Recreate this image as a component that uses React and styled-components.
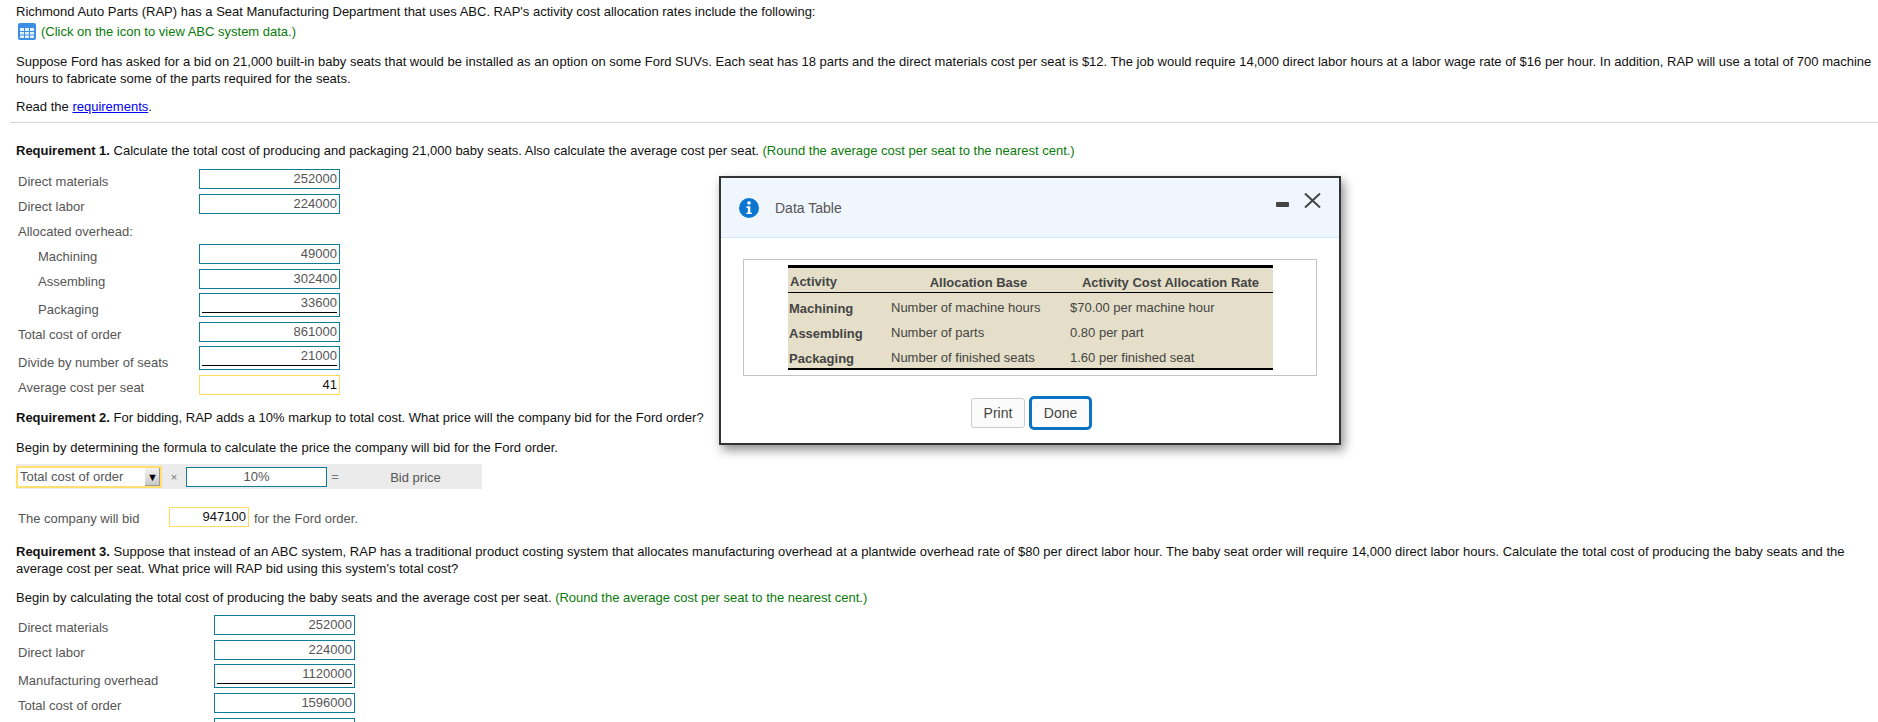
import React from "react";
import styled, { createGlobalStyle } from "styled-components";

const GlobalStyle = createGlobalStyle`
  html, body {
    margin: 0;
    padding: 0;
    background: #fff;
  }
  body {
    font-family: "Liberation Sans", Arial, sans-serif;
    font-size: 13px;
    color: #111;
  }
`;

const Page = styled.div`
  position: relative;
  width: 1878px;
  height: 722px;
  overflow: hidden;
  box-sizing: border-box;
`;

const Section = styled.div`
  padding-left: 16px;
`;

const Para = styled.p`
  margin: ${(p) => p.$top || 0}px 0 0;
  line-height: 17px;
  white-space: nowrap;
`;

const Hint = styled.span`
  color: #0a7a0a;
`;

const Link = styled.a`
  color: #0000ee;
  text-decoration: underline;
`;

const Divider = styled.hr`
  margin: 7px 0 0;
  border: 0;
  border-top: 1px solid #d3d6df;
  margin-left: 10px;
`;

const FormRows = styled.div`
  display: flex;
  flex-direction: column;
  margin-top: ${(p) => p.$top || 0}px;
`;

const Row = styled.div`
  display: flex;
  align-items: center;
  height: ${(p) => (p.$under ? 24 : 20)}px;
  margin-top: ${(p) => (p.$under ? -1 : 0)}px;
  margin-bottom: 5px;
`;

const Label = styled.span`
  width: ${(p) => p.$width}px;
  padding-left: ${(p) => (p.$indent ? 22 : 2)}px;
  padding-top: ${(p) => (p.$under ? 8 : 4)}px;
  box-sizing: border-box;
  color: #555;
  flex: none;
`;

const AmountBox = styled.div`
  width: ${(p) => p.$width || 141}px;
  height: ${(p) => (p.$under ? 24 : 20)}px;
  box-sizing: border-box;
  border: 1px solid ${(p) => (p.$answer ? "#ffdc5c" : "#0f7c9c")};
  padding: 0 2px;
  color: ${(p) => (p.$answer ? "#111" : "#555")};
  text-align: right;
  line-height: 17px;
  background: #fff;
  flex: none;
`;

const AmountValue = styled.div`
  height: ${(p) => (p.$under ? 18 : 17)}px;
  border-bottom: ${(p) => (p.$under ? "1px solid #000" : "0")};
`;

const FormulaBar = styled.div`
  display: flex;
  align-items: center;
  width: 466px;
  height: 25px;
  margin-top: 8px;
  background: #ebebeb;
`;

const Select = styled.div`
  display: flex;
  align-items: center;
  justify-content: space-between;
  width: 146px;
  height: 22px;
  box-sizing: border-box;
  border: 2px solid #ffdf6e;
  background: #fff;
  padding-left: 2px;
  color: #555;
  flex: none;
`;

const SelectArrow = styled.span`
  display: flex;
  align-items: center;
  justify-content: center;
  width: 15px;
  height: 18px;
  background: linear-gradient(#f2f2f2, #c8c8c8);
  box-shadow: inset -1px -1px 0 #999;
  color: #000;
  font-size: 11px;
`;

const Operator = styled.span`
  width: ${(p) => p.$width}px;
  text-align: center;
  color: #777;
  font-size: ${(p) => p.$size || 13}px;
  flex: none;
`;

const FactorBox = styled(AmountBox)`
  text-align: center;
`;

const BidPrice = styled.span`
  flex: 1;
  padding: 2px 0 0 6px;
  text-align: center;
  color: #555;
`;

const BidRow = styled.div`
  display: flex;
  align-items: center;
  height: 20px;
  margin-top: 18px;
`;

const BidLabel = styled.span`
  width: 153px;
  padding-left: 2px;
  padding-top: 2px;
  box-sizing: border-box;
  color: #555;
  flex: none;
`;

const BidTail = styled.span`
  margin-left: 5px;
  padding-top: 2px;
  color: #555;
`;

const Dialog = styled.div`
  position: absolute;
  left: 719px;
  top: 176px;
  width: 622px;
  height: 269px;
  box-sizing: border-box;
  border: 2px solid #333;
  background: #fff;
  box-shadow: 3px 5px 10px rgba(0, 0, 0, 0.45);
`;

const DialogHeader = styled.div`
  display: flex;
  align-items: center;
  height: 60px;
  box-sizing: border-box;
  padding: 0 18px 0 18px;
  background: #f0f6fe;
  border-bottom: 1px solid #cfe6fb;
`;

const DialogTitle = styled.span`
  margin-left: 16px;
  color: #555;
  font-size: 14px;
`;

const HeaderActions = styled.div`
  display: flex;
  align-items: flex-start;
  gap: 15px;
  margin-left: auto;
  margin-bottom: 14px;
`;

const Minimize = styled.span`
  width: 13px;
  height: 5px;
  margin-top: 9px;
  border-radius: 1px;
  background: #444;
`;

const DialogBody = styled.div`
  padding: 21px 22px 0 22px;
`;

const TableFrame = styled.div`
  height: 117px;
  box-sizing: border-box;
  padding: 5px 0 0 44px;
  border: 1px solid #c4c4c4;
`;

const DataTable = styled.table`
  width: 485px;
  border-collapse: collapse;
  table-layout: fixed;
  background: #e5dfc9;
  border-top: 3px solid #000;
  border-bottom: 2px solid #000;
  color: #444;

  tr:last-child td {
    height: 26px;
  }
`;

const HeadCell = styled.th`
  box-sizing: border-box;
  height: 26px;
  padding: ${(p) => (p.$lift ? 3 : 5)}px ${(p) => p.$right || 0}px 0 ${(p) => p.$pad || 0}px;
  font-weight: bold;
  text-align: ${(p) => p.$align || "center"};
  border-bottom: 1px solid #000;
`;

const NameCell = styled.td`
  box-sizing: border-box;
  height: 25px;
  padding: 7px 0 0 1px;
  line-height: 17px;
  vertical-align: top;
  font-weight: bold;
`;

const TextCell = styled.td`
  box-sizing: border-box;
  height: 25px;
  padding: 6px 0 0;
  line-height: 17px;
  vertical-align: top;
`;

const ButtonRow = styled.div`
  display: flex;
  align-items: center;
  justify-content: center;
  gap: 4px;
  margin-top: 20px;
  padding-left: 3px;
`;

const Button = styled.button`
  height: ${(p) => (p.$primary ? 34 : 30)}px;
  width: ${(p) => (p.$primary ? 63 : 54)}px;
  box-sizing: border-box;
  border: ${(p) => (p.$primary ? "3px solid #0b72c4" : "1px solid #ccc")};
  border-radius: ${(p) => (p.$primary ? 5 : 3)}px;
  background: #fbfbfb;
  color: #444;
  font-family: inherit;
  font-size: 14px;
  padding: 0;
`;

const GridGlyph = styled.svg`
  vertical-align: -4px;
  margin: 0 5px 0 2px;
`;

function GridIcon() {
  return (
    <GridGlyph width="18" height="17" viewBox="0 0 18 17">
      <rect x="0" y="0" width="18" height="17" rx="2" fill="#3a8fe4" />
      <path
        d="M2 5h4v3H2zM7 5h4v3H7zM12 5h4v3h-4zM2 9h4v2.500H2zM7 9h4v2.500H7zM12 9h4v2.500h-4zM2 12.500h4V15H2zM7 12.500h4V15H7zM12 12.500h4V15h-4z"
        fill="#e6f0fb"
      />
    </GridGlyph>
  );
}

function InfoIcon() {
  return (
    <svg width="20" height="20" viewBox="0 0 20 20">
      <circle cx="10" cy="10" r="10" fill="#0b76cf" />
      <circle cx="10" cy="5" r="1.8" fill="#fff" />
      <path d="M7.5 8.3h3.8v6.2h1.4v1.600H7.500v-1.600h1.400V9.900H7.500z" fill="#fff" />
    </svg>
  );
}

function CloseIcon() {
  return (
    <svg width="17" height="15" viewBox="0 0 17 15">
      <path d="M1 0.5L16 14.500M16 0.500L1 14.500" stroke="#444" strokeWidth="2" fill="none" />
    </svg>
  );
}

function Amount({ label, value, under, indent, answer, labelWidth = 183 }) {
  return (
    <Row $under={under}>
      <Label $width={labelWidth} $indent={indent} $under={under}>
        {label}
      </Label>
      <AmountBox $under={under} $answer={answer}>
        <AmountValue $under={under}>{value}</AmountValue>
      </AmountBox>
    </Row>
  );
}

const tableRows = [
  ["Machining", "Number of machine hours", "$70.00 per machine hour"],
  ["Assembling", "Number of parts", "0.80 per part"],
  ["Packaging", "Number of finished seats", "1.60 per finished seat"],
];

export default function App() {
  return (
    <Page>
      <GlobalStyle />
      <Section>
        <Para $top={3}>
          Richmond Auto Parts (RAP) has a Seat Manufacturing Department that uses ABC. RAP's activity cost allocation rates include the following:
        </Para>
        <Para $top={3}>
          <GridIcon />
          <Hint>(Click on the icon to view ABC system data.)</Hint>
        </Para>
        <Para $top={13}>
          Suppose Ford has asked for a bid on 21,000 built-in baby seats that would be installed as an option on some Ford SUVs. Each seat has 18 parts and the direct materials cost per seat is $12. The job would require 14,000 direct labor hours at a labor wage rate of $16 per hour. In addition, RAP will use a total of 700 machine
          <br />
          hours to fabricate some of the parts required for the seats.
        </Para>
        <Para $top={11}>
          Read the <Link href="#">requirements</Link>.
        </Para>
      </Section>
      <Divider />
      <Section>
        <Para $top={19}>
          <b>Requirement 1.</b> Calculate the total cost of producing and packaging 21,000 baby seats. Also calculate the average cost per seat. <Hint>(Round the average cost per seat to the nearest cent.)</Hint>
        </Para>
        <FormRows $top={10}>
          <Amount label="Direct materials" value="252000" />
          <Amount label="Direct labor" value="224000" />
          <Row>
            <Label $width={183}>Allocated overhead:</Label>
          </Row>
          <Amount indent label="Machining" value="49000" />
          <Amount indent label="Assembling" value="302400" />
          <Amount indent under label="Packaging" value="33600" />
          <Amount label="Total cost of order" value="861000" />
          <Amount under label="Divide by number of seats" value="21000" />
          <Amount answer label="Average cost per seat" value="41" />
        </FormRows>
        <Para $top={9}>
          <b>Requirement 2.</b> For bidding, RAP adds a 10% markup to total cost. What price will the company bid for the Ford order?
        </Para>
        <Para $top={13}>Begin by determining the formula to calculate the price the company will bid for the Ford order.</Para>
        <FormulaBar>
          <Select>
            Total cost of order
            <SelectArrow>▼</SelectArrow>
          </Select>
          <Operator $width={24} $size={11}>×</Operator>
          <FactorBox>10%</FactorBox>
          <Operator $width={16}>=</Operator>
          <BidPrice>Bid price</BidPrice>
        </FormulaBar>
        <BidRow>
          <BidLabel>The company will bid</BidLabel>
          <AmountBox $answer $width={80}>947100</AmountBox>
          <BidTail>for the Ford order.</BidTail>
        </BidRow>
        <Para $top={16}>
          <b>Requirement 3.</b> Suppose that instead of an ABC system, RAP has a traditional product costing system that allocates manufacturing overhead at a plantwide overhead rate of $80 per direct labor hour. The baby seat order will require 14,000 direct labor hours. Calculate the total cost of producing the baby seats and the
          <br />
          average cost per seat. What price will RAP bid using this system's total cost?
        </Para>
        <Para $top={12}>
          Begin by calculating the total cost of producing the baby seats and the average cost per seat. <Hint>(Round the average cost per seat to the nearest cent.)</Hint>
        </Para>
        <FormRows $top={9}>
          <Amount labelWidth={198} label="Direct materials" value="252000" />
          <Amount labelWidth={198} label="Direct labor" value="224000" />
          <Amount labelWidth={198} under label="Manufacturing overhead" value="1120000" />
          <Amount labelWidth={198} label="Total cost of order" value="1596000" />
          <Amount labelWidth={198} value="" />
        </FormRows>
      </Section>

      <Dialog>
        <DialogHeader>
          <InfoIcon />
          <DialogTitle>Data Table</DialogTitle>
          <HeaderActions>
            <Minimize />
            <CloseIcon />
          </HeaderActions>
        </DialogHeader>
        <DialogBody>
          <TableFrame>
            <DataTable>
              <colgroup>
                <col style={{ width: 103 }} />
                <col style={{ width: 179 }} />
                <col />
              </colgroup>
              <thead>
                <tr>
                  <HeadCell $align="left" $pad={2} $lift>Activity</HeadCell>
                  <HeadCell $right={4}>Allocation Base</HeadCell>
                  <HeadCell $right={2}>Activity Cost Allocation Rate</HeadCell>
                </tr>
              </thead>
              <tbody>
                {tableRows.map((row) => (
                  <tr key={row[0]}>
                    <NameCell>{row[0]}</NameCell>
                    <TextCell>{row[1]}</TextCell>
                    <TextCell>{row[2]}</TextCell>
                  </tr>
                ))}
              </tbody>
            </DataTable>
          </TableFrame>
          <ButtonRow>
            <Button>Print</Button>
            <Button $primary>Done</Button>
          </ButtonRow>
        </DialogBody>
      </Dialog>
    </Page>
  );
}
